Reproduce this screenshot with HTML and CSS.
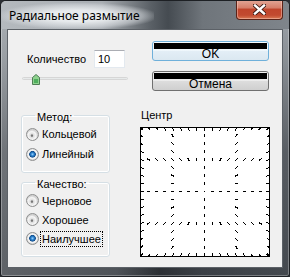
FILE: index.html
```html
<!DOCTYPE html>
<html lang="ru">
<head>
    <meta charset="UTF-8">
    <title>Радиальное размытие</title>
    <link rel="stylesheet" href="styles.css">
</head>
<body>
    <div class="window">
        <div class="titlebar">
            <span class="title">Радиальное размытие</span>
            <div class="close">
                <svg width="13" height="11" viewBox="0 0 13 11">
                    <path d="M2 1.5 L11 9.5 M11 1.5 L2 9.5" stroke="#3b1a14" stroke-width="4.2" stroke-linecap="square"/>
                    <path d="M2 1.5 L11 9.5 M11 1.5 L2 9.5" stroke="#fff" stroke-width="2.4" stroke-linecap="square"/>
                </svg>
            </div>
        </div>
        <div class="client">
            <div class="col-left">
                <div class="amount">
                    <span class="label">Количество</span>
                    <div class="field">10</div>
                </div>
                <div class="slider">
                    <div class="track"></div>
                    <svg class="thumb" width="8" height="11" viewBox="0 0 8 11">
                        <path d="M4 0.5 L7.5 3.5 L7.5 10.5 L0.5 10.5 L0.5 3.5 Z" fill="#8fd28f" stroke="#4f7d55"/>
                        <path d="M2 5 L6 5 L6 9 L2 9 Z" fill="#4fae5c"/>
                    </svg>
                </div>
                <fieldset class="group group-method">
                    <legend>Метод:</legend>
                    <div class="radio"><span class="dot"></span><span>Кольцевой</span></div>
                    <div class="radio"><span class="dot on"></span><span>Линейный</span></div>
                </fieldset>
                <fieldset class="group group-quality">
                    <legend>Качество:</legend>
                    <div class="radio"><span class="dot"></span><span>Черновое</span></div>
                    <div class="radio"><span class="dot"></span><span>Хорошее</span></div>
                    <div class="radio"><span class="dot on"></span><span class="focus">Наилучшее</span></div>
                </fieldset>
            </div>
            <div class="col-right">
                <button class="btn btn-default">OK</button>
                <button class="btn">Отмена</button>
                <div class="center-label">Центр</div>
                <svg id="preview" class="preview" width="130" height="130" viewBox="0 0 130 130" shape-rendering="crispEdges"></svg>
            </div>
        </div>
    </div>
    <script src="script.js"></script>
</body>
</html>
```

FILE: styles.css
```css
* { box-sizing: border-box; }
body { margin: 0; background: #2b2f34; font-family: "Liberation Sans", Arial, sans-serif; font-size: 11px; color: #000; }

.window {
    width: 290px; height: 277px;
    display: flex; flex-direction: column;
    border: 1px solid #1d2024; border-radius: 6px 6px 3px 3px;
    background:
        linear-gradient(90deg, rgba(255,255,255,.18) 0, rgba(255,255,255,.1) 40%, rgba(0,0,0,.25) 55%, rgba(0,0,0,0) 70%, rgba(255,255,255,.05) 100%),
        linear-gradient(180deg, #9ba1a7 0, #858b91 20%, #50555b 55%, #3a3f45 100%);
    box-shadow: inset 0 0 0 1px rgba(255,255,255,.3);
    overflow: hidden;
}

.titlebar {
    height: 28px; flex: none;
    display: flex; align-items: flex-start;
    background: linear-gradient(90deg, #b4b9be 0, #a9aeb3 35%, #5a6066 52%, #454b51 58%, #6f757b 70%, #7f858b 100%);
}
.title {
    margin: 2px 0 0 0; padding: 5px 14px 6px 8px;
    font-family: "Noto Sans", "Liberation Sans", sans-serif; font-size: 12px; line-height: 15px;
    background: radial-gradient(ellipse at center, rgba(235,238,240,.95) 30%, rgba(220,224,228,.5) 60%, rgba(200,205,210,0) 75%);
}
.close {
    margin: -1px 6px 0 auto;
    width: 47px; height: 20px;
    display: flex; align-items: center; justify-content: center;
    border: 1px solid #5a2318; border-top: none; border-radius: 0 0 4px 4px;
    background: linear-gradient(180deg, #e3a898 0, #d6806b 40%, #c0452c 50%, #c24a30 80%, #d97a55 100%);
    box-shadow: inset 0 0 0 1px rgba(255,210,200,.45);
}

.client {
    margin: 0 6px; height: 239px; flex: none;
    display: flex;
    background: #f0f0f0;
    border: 1px solid #5c6167;
}

.col-left { margin-left: 13px; width: 110px; }
.amount { margin-top: 20px; display: flex; align-items: center; height: 18px; }
.label { margin-left: 6px; width: 67px; }
.field {
    width: 31px; height: 18px; padding: 2px 0 0 3px;
    background: #fff; border: 1px solid #e3e9ef; border-top-color: #abadb3;
}
.slider { position: relative; margin: 4px 0 0 1px; width: 106px; height: 13px; }
.track {
    position: absolute; left: 0; right: 0; top: 5px; height: 3px;
    border: 1px solid #d6d6d6; border-radius: 2px; background: #e7eaea;
}
.thumb { position: absolute; left: 10px; top: 2px; }

.group {
    margin: 0; width: 89px;
    border: 1px solid #d5dfe5; border-radius: 3px;
    box-shadow: inset 0 0 0 1px #fff;
    padding: 0 0 8px 4px;
}
.group legend { margin-left: 9px; padding: 5px 2px 0; line-height: 13px; }
.group-method { margin-top: 21px; }
.group-quality { margin-top: 0; }
.radio { display: flex; align-items: center; gap: 3px; height: 20px; }
.group-quality .radio { height: 19px; }
.dot {
    flex: none; width: 13px; height: 13px; border-radius: 50%;
    border: 1px solid #8e8f8f;
    background: radial-gradient(circle at 45% 60%, #777 0, #777 0.8px, #dcdcdc 1.6px, #f6f6f6 4px, #d2d2d2 5.5px);
}
.dot.on { background: radial-gradient(circle at 50% 48%, #9fd4fb 0, #2e86d3 1.5px, #134f8e 3px, #eeeeee 3.6px, #f6f6f6 4.5px, #d2d2d2 5.5px); }
.focus { outline: 1px dotted #000; outline-offset: 1px; }

.col-right { margin-left: 9px; width: 131px; display: flex; flex-direction: column; }
.btn {
    margin: 11px 0 0 12px; width: 117px; height: 20px; padding: 6px 0 0;
    font: 12px/12px "Liberation Sans", Arial, sans-serif;
    border: 1px solid #707070; border-radius: 3px;
    background:
        linear-gradient(#000, #000) 1px 1px / calc(100% - 2px) 6px no-repeat,
        linear-gradient(180deg, #f2f2f2 0, #ebebeb 50%, #dddddd 51%, #cfcfcf 100%);
}
.btn + .btn { margin-top: 10px; }
.btn-default {
    border-color: #6fb0da;
    background:
        linear-gradient(#000, #000) 1px 1px / calc(100% - 2px) 6px no-repeat,
        linear-gradient(180deg, #f6fbfe 0, #eef6fb 50%, #e3eef6 51%, #dbe8f1 100%);
}
.center-label { margin: 18px 0 0 1px; line-height: 13px; }
.preview { display: block; margin-top: 5px; background: #fff; }
```

FILE: script.js
```js
// radial blur preview: grid points drawn as short strokes toward the centre
const svg = document.getElementById('preview');
const ns = 'http://www.w3.org/2000/svg';
const c = 64.5;

function line(x1, y1, x2, y2) {
    const l = document.createElementNS(ns, 'line');
    l.setAttribute('x1', x1); l.setAttribute('y1', y1);
    l.setAttribute('x2', x2); l.setAttribute('y2', y2);
    l.setAttribute('stroke', '#000');
    svg.appendChild(l);
}

function dash(px, py, len, inward) {
    let dx = c - px, dy = c - py;
    const d = Math.hypot(dx, dy);
    if (d < 1) { line(px - 0.5, py, px + 0.5, py); return; }
    dx /= d; dy /= d;
    if (inward) line(px, py, px + dx * len, py + dy * len);
    else line(px - dx * len / 2, py - dy * len / 2, px + dx * len / 2, py + dy * len / 2);
}

const border = document.createElementNS(ns, 'rect');
border.setAttribute('x', 0.5); border.setAttribute('y', 0.5);
border.setAttribute('width', 129); border.setAttribute('height', 129);
border.setAttribute('fill', 'none'); border.setAttribute('stroke', '#000');
svg.appendChild(border);

[32, 64, 96].forEach(L => {
    for (let t = 8; t <= 120; t += 8) {
        dash(L + 0.5, t + 0.5, 3, false);
        dash(t + 0.5, L + 0.5, 3, false);
    }
});

for (let t = 0; t <= 128; t += 8) {
    dash(t + 0.5, 1, 3, true);
    dash(t + 0.5, 129, 3, true);
    dash(1, t + 0.5, 3, true);
    dash(129, t + 0.5, 3, true);
}
```
